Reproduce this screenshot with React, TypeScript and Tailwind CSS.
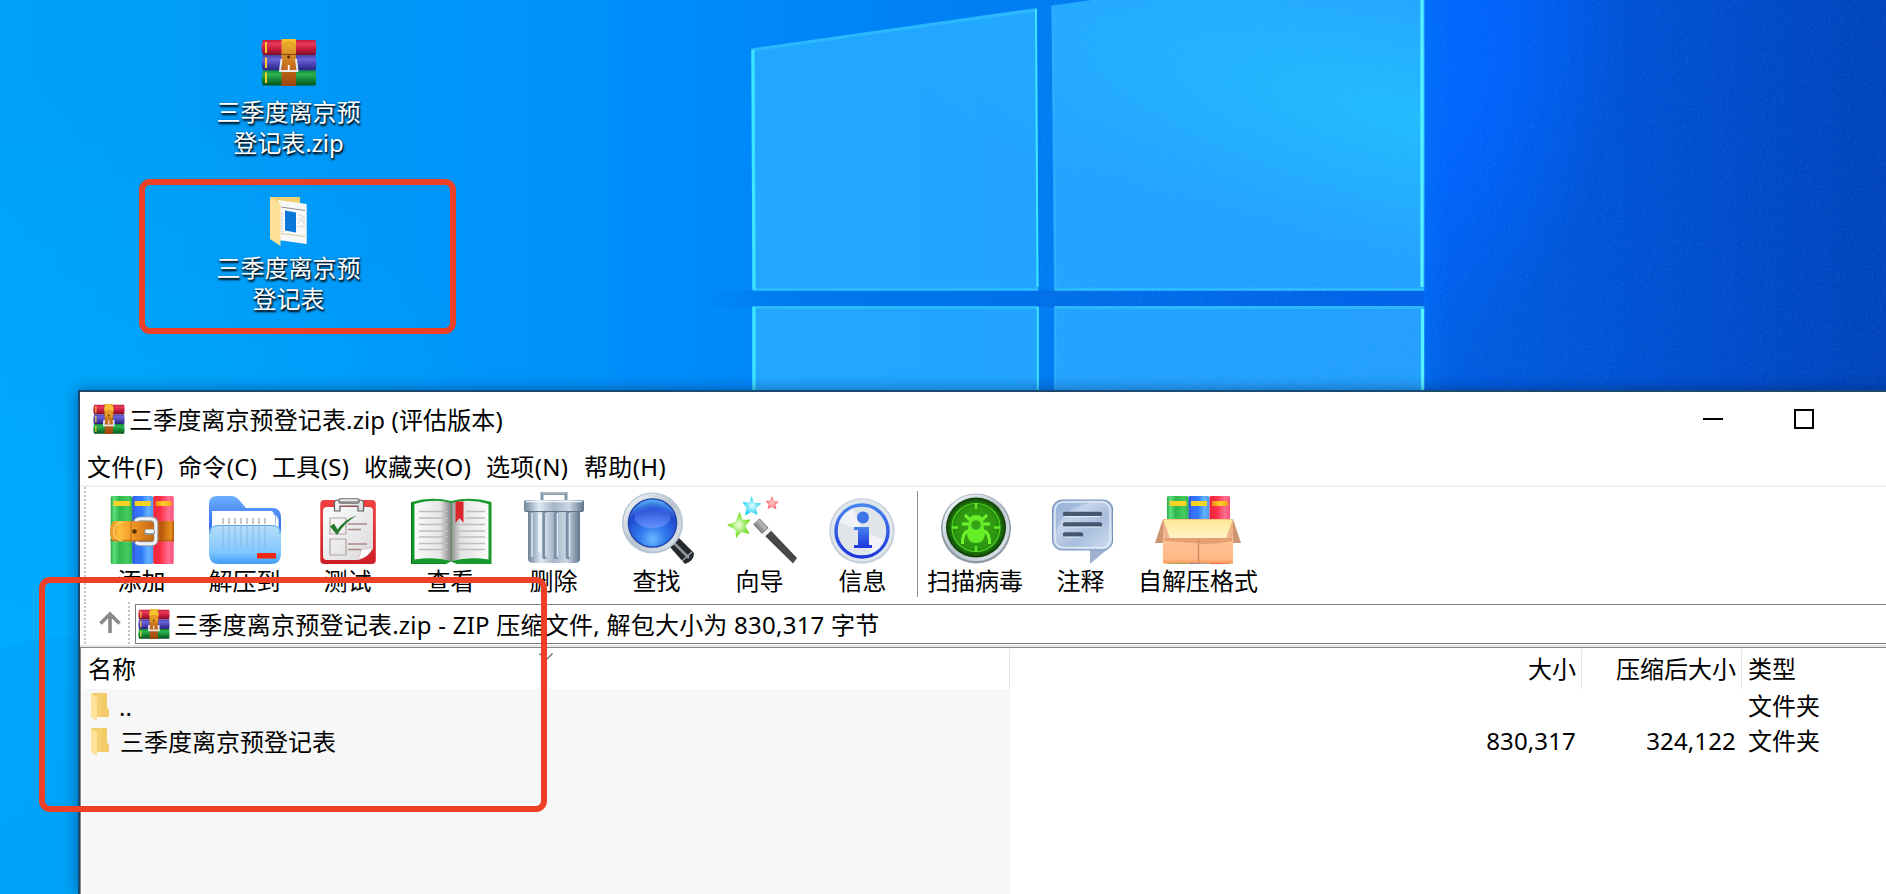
import React from "react";

function Wallpaper() {
  return (
    <svg className="absolute inset-0" width="1886" height="894" viewBox="0 0 1886 894">
      <defs>
        <linearGradient id="sky" x1="0" x2="1886" y1="0" y2="0" gradientUnits="userSpaceOnUse">
          <stop offset="0" stopColor="#00a1f7" />
          <stop offset=".12" stopColor="#009bf7" />
          <stop offset=".3" stopColor="#0092fa" />
          <stop offset=".4" stopColor="#0088fa" />
          <stop offset=".56" stopColor="#007cf2" />
          <stop offset=".7" stopColor="#0068ea" />
          <stop offset=".78" stopColor="#005cdf" />
          <stop offset=".88" stopColor="#0050d2" />
          <stop offset="1" stopColor="#0043bb" />
        </linearGradient>
        <radialGradient id="glowLeft" cx="0" cy="640" r="560" gradientUnits="userSpaceOnUse">
          <stop offset="0" stopColor="#00acff" />
          <stop offset="1" stopColor="#00acff" stopOpacity="0" />
        </radialGradient>
        <radialGradient id="glowRight" cx="0" cy="0" r="1" gradientUnits="userSpaceOnUse" gradientTransform="translate(1400 70) rotate(14) scale(220 330)">
          <stop offset="0" stopColor="#006cff" />
          <stop offset=".45" stopColor="#0064ff" stopOpacity=".85" />
          <stop offset="1" stopColor="#0060ff" stopOpacity="0" />
        </radialGradient>
        <linearGradient id="edgeRight" x1="1424" x2="1450" y1="0" y2="0" gradientUnits="userSpaceOnUse">
          <stop offset="0" stopColor="#0070f8" stopOpacity=".5" />
          <stop offset="1" stopColor="#0070f8" stopOpacity="0" />
        </linearGradient>
        <linearGradient id="gapShade" x1="700" x2="1425" y1="0" y2="0" gradientUnits="userSpaceOnUse">
          <stop offset="0" stopColor="#006ee4" stopOpacity="0" />
          <stop offset=".15" stopColor="#0072e6" stopOpacity=".7" />
          <stop offset="1" stopColor="#0060e6" stopOpacity=".8" />
        </linearGradient>
        <linearGradient id="pane" x1="750" x2="1425" y1="0" y2="0" gradientUnits="userSpaceOnUse">
          <stop offset="0" stopColor="#22a8ff" />
          <stop offset=".55" stopColor="#22a2ff" />
          <stop offset="1" stopColor="#239fff" />
        </linearGradient>
        <radialGradient id="paneGlow" cx="0" cy="0" r="1" gradientUnits="userSpaceOnUse" gradientTransform="translate(1425 120) rotate(14) scale(620 170)">
          <stop offset="0" stopColor="#22c0ff" stopOpacity=".9" />
          <stop offset=".5" stopColor="#22b4ff" stopOpacity=".65" />
          <stop offset="1" stopColor="#22a8ff" stopOpacity="0" />
        </radialGradient>
        <filter id="grain" x="0" y="0" width="100%" height="100%">
          <feTurbulence type="fractalNoise" baseFrequency=".35" numOctaves="2" seed="4" />
          <feColorMatrix values="0 0 0 0 .4  0 0 0 0 .7  0 0 0 0 1  .5 0 0 0 -.17" />
        </filter>
      </defs>
      <rect width="1886" height="894" fill="url(#sky)" />
      <rect width="700" height="894" fill="url(#glowLeft)" />
      <rect x="1040" width="700" height="420" fill="url(#glowRight)" />
      <rect x="1424" width="26" height="392" fill="url(#edgeRight)" />
      <rect x="700" y="290" width="724" height="17" fill="url(#gapShade)" />
      <path d="M0 648 Q40 636 80 638 V894 H0Z" fill="#0099ef" opacity=".3" />
      <g fill="url(#pane)">
        <path d="M751 48.500 1036.500 8 1038.500 290.700H752.500Z" />
        <path d="M1051.500 5.700 1092 0H1424.500V290.700H1054Z" />
        <path d="M752 306H1038.500V400H752Z" />
        <path d="M1054 306H1424.500V400H1054Z" />
      </g>
      <path d="M1051.500 5.700 1092 0H1424.500V290.700H1054ZM751 48.500 1036.500 8 1038.500 290.700H752.500Z" fill="url(#paneGlow)" />
      <g fill="none" stroke="#2ab8ff" strokeWidth="3">
        <path d="M752 50 1036 10M753 289.300H1038M1055 289.300H1424M753 307.500H1038M1055 307.500H1424" />
      </g>
      <path d="M1053 7 1055.500 289M1055.500 307V392" stroke="#2cacff" strokeWidth="2" />
      <g fill="none" stroke="#3ce6ff">
        <path d="M753 50 754 289.500M754 307V392" strokeWidth="3.200" />
        <path d="M1036 9 1037.500 287M1037.800 307V392" strokeWidth="2" />
        <path d="M1422 0V287M1422.500 309V392" strokeWidth="3.200" stroke="#55f2ff" />
      </g>
      <rect x="1040" width="846" height="392" filter="url(#grain)" opacity=".22" />
    </svg>
  );
}

/* Three stacked books held by a belt */
function RarIcon({ small, className }: { small?: boolean; className: string }) {
  const id = small ? "rs" : "rb";
  const rows = [
    ["#e83a5c", "#c41a3c", "#7c0c26"],
    ["#6a66dc", "#4a42b0", "#28227c"],
    ["#2eb450", "#148a38", "#06501c"],
  ];
  return (
    <svg viewBox="0 0 56 47" preserveAspectRatio="none" className={className}>
      <defs>
        {rows.map((r, i) => (
          <linearGradient key={i} id={id + i} x1="0" x2="0" y1="0" y2="1">
            <stop offset="0" stopColor={r[1]} />
            <stop offset=".25" stopColor={r[0]} />
            <stop offset=".6" stopColor={r[1]} />
            <stop offset="1" stopColor={r[2]} />
          </linearGradient>
        ))}
        <linearGradient id={id + "belt"} x1="0" x2="0" y1="0" y2="1">
          <stop offset="0" stopColor="#f8c02c" />
          <stop offset=".25" stopColor="#dd9628" />
          <stop offset=".6" stopColor="#c46c1c" />
          <stop offset="1" stopColor="#9a440c" />
        </linearGradient>
      </defs>
      <path d="M2 1H54.500Q56 8 54.500 16.500H2Q-1 8 2 1Z" fill={`url(#${id}0)`} />
      <path d="M2 16.500H54.500Q56 24 54.500 31.500H2Q-1 24 2 16.500Z" fill={`url(#${id}1)`} />
      <path d="M2 31.500H54.500Q56 39 54.500 46.500H2Q-1 39 2 31.500Z" fill={`url(#${id}2)`} />
      <path d="M4 3H6V14H4ZM4 18.500H6V29H4ZM4 33.500H6V44H4Z" fill="#f6cb2d" />
      <path d="M20.500 0H35V47H20.500Z" fill={`url(#${id}belt)`} />
      {!small && <path d="M20.500 15.500H35" stroke="#8a4a0c" strokeWidth="1" />}
      {small && <path d="M20 10Q19 0 27.500 0T36 10L34.500 21H21Z" fill="#e89a26" stroke="#b8650e" strokeWidth=".8" />}
      {small && <path d="M20 11Q19 0 27.500 0T36 11Q28 7 20 11Z" fill="#f8c436" />}
      {!small && <path d="M22 8Q27.500-1 34 8" fill="none" stroke="#c77b15" strokeWidth=".8" opacity=".7" />}
      <circle cx="27.600" cy="18" r="1.400" fill="#4a2606" />
      <path
        d={small ? "M19.500 25 19 33.500H36.500L36 25" : "M20.500 20 19 32H36.500L35 20"}
        fill="none"
        stroke="#e8eaee"
        strokeWidth={small ? 3 : 2}
        strokeLinejoin="round"
      />
      <path d="M27.700 26V31.500" stroke="#fff" strokeWidth="1.800" />
    </svg>
  );
}

function DesktopFolder() {
  return (
    <svg viewBox="0 0 37 49" className="mr-[2px] h-[49px] w-[37px]">
      <path d="M0 0H30V38H0Z" fill="#f4cf71" />
      <path d="M8 3 36.700 7V47L8 43Z" fill="#f8f8f8" />
      <path d="M11 10 35 13.500" stroke="#8c9399" strokeWidth="1" />
      <path d="M12 16V36" stroke="#c8cdd1" strokeWidth="1.500" strokeDasharray="1.500 1.500" />
      <path d="M15 13.500 26 15.500V35.500L15 33.500Z" fill="#0a78d8" />
      <path d="M28 18 34 19V30L28 29.500M28 21 34 26M33 19 28 27" fill="none" stroke="#dcdcdc" strokeWidth="1" />
      <path d="M11 36.500 35 39.500" stroke="#d6cc9d" strokeWidth="1" />
      <path d="M0 0 10.500 6.500V49L0 42Z" fill="#fde197" />
    </svg>
  );
}

function RowFolder() {
  return (
    <svg viewBox="0 0 19 28" className="h-7 w-[19px]">
      <path d="M0 0H16V14.500L18 17V24H0Z" fill="#f5cf70" />
      <path d="M11 0H16V14.500L18 17V24H11Z" fill="#f0c45a" opacity=".45" />
      <path d="M0 0 6 5V28L0 24Z" fill="#fde298" />
    </svg>
  );
}

function Books() {
  return (
    <g>
      <rect x="0" y="0" width="21.500" height="68" rx="1.500" fill="url(#bkG)" />
      <rect x="21.500" y="0" width="21" height="68" rx="1.500" fill="url(#bkB)" />
      <rect x="42.500" y="0" width="20.500" height="68" rx="1.500" fill="url(#bkR)" />
      <path d="M2.500 5H19.500V10H2.500ZM24 5H40V10H24Z" fill="#f8d326" />
      <path d="M45 5H61V10H45Z" fill="url(#tagR)" />
    </g>
  );
}

function SharedGradients() {
  return (
    <svg width="0" height="0" className="absolute">
      <defs>
        <linearGradient id="bkG"><stop offset="0" stopColor="#28a845" /><stop offset=".15" stopColor="#5ee07e" /><stop offset=".4" stopColor="#2fb84c" /><stop offset=".8" stopColor="#46cc62" /><stop offset="1" stopColor="#2cb34a" /></linearGradient>
        <linearGradient id="bkB"><stop offset="0" stopColor="#1d4fc8" /><stop offset=".15" stopColor="#3a6cf5" /><stop offset=".45" stopColor="#2f7af8" /><stop offset=".75" stopColor="#63b0ff" /><stop offset="1" stopColor="#4d9cf8" /></linearGradient>
        <linearGradient id="bkR"><stop offset="0" stopColor="#e8253e" /><stop offset=".35" stopColor="#ff2d46" /><stop offset=".75" stopColor="#ff6f92" /><stop offset="1" stopColor="#f74f78" /></linearGradient>
        <linearGradient id="tagR"><stop offset="0" stopColor="#fa8a14" /><stop offset=".5" stopColor="#fcd028" /><stop offset="1" stopColor="#fba01c" /></linearGradient>
        <linearGradient id="belt"><stop offset="0" stopColor="#e8901e" /><stop offset=".15" stopColor="#ffbd3a" /><stop offset=".4" stopColor="#ec9024" /><stop offset=".65" stopColor="#c86e14" /><stop offset=".8" stopColor="#b8560c" /><stop offset=".95" stopColor="#e8901e" /><stop offset="1" stopColor="#b8560c" /></linearGradient>
        <linearGradient id="steel" x1="0" y1="0" x2="1" y2="1"><stop offset="0" stopColor="#fafcfd" /><stop offset=".5" stopColor="#b8c3cd" /><stop offset="1" stopColor="#e4ebf0" /></linearGradient>
        <linearGradient id="metal"><stop offset="0" stopColor="#6f8499" /><stop offset=".25" stopColor="#dfe9f5" /><stop offset=".5" stopColor="#a4b5c6" /><stop offset=".75" stopColor="#cbd8e6" /><stop offset="1" stopColor="#5f758b" /></linearGradient>
        <linearGradient id="folderBack" x2="0" y2="1"><stop offset="0" stopColor="#6db0ff" /><stop offset=".6" stopColor="#3a74f2" /></linearGradient>
        <linearGradient id="folderFront" x2="0" y2="1"><stop offset="0" stopColor="#b7def9" /><stop offset=".7" stopColor="#80c8ff" /><stop offset="1" stopColor="#3f9cf7" /></linearGradient>
        <linearGradient id="paper" x2="1" y2="1"><stop offset="0" stopColor="#fff" /><stop offset="1" stopColor="#d8d8d8" /></linearGradient>
        <linearGradient id="redBoard" x2="0" y2="1"><stop offset="0" stopColor="#f14141" /><stop offset="1" stopColor="#cf1d25" /></linearGradient>
        <linearGradient id="pageL"><stop offset="0" stopColor="#fafafa" /><stop offset=".7" stopColor="#e6e6e6" /><stop offset="1" stopColor="#858585" /></linearGradient>
        <linearGradient id="pageR"><stop offset="0" stopColor="#929292" /><stop offset=".25" stopColor="#e2e2e2" /><stop offset="1" stopColor="#fafafa" /></linearGradient>
        <radialGradient id="lens" cx=".5" cy=".85" r=".85"><stop offset="0" stopColor="#6ab8ff" /><stop offset=".35" stopColor="#2f78ee" /><stop offset=".75" stopColor="#2048cc" /><stop offset="1" stopColor="#56b4f8" /></radialGradient>
        <linearGradient id="gloss" x2="0" y2="1"><stop offset="0" stopColor="#3f68f0" stopOpacity=".3" /><stop offset="1" stopColor="#7c9cff" stopOpacity=".7" /></linearGradient>
        <linearGradient id="wand" x1="0" y1="1" x2="1" y2="0"><stop offset="0" stopColor="#101010" /><stop offset=".5" stopColor="#4a4a4a" /><stop offset="1" stopColor="#151515" /></linearGradient>
        <linearGradient id="wandTip" x1="0" y1="1" x2="1" y2="0"><stop offset="0" stopColor="#444" /><stop offset=".6" stopColor="#b5b5b5" /><stop offset="1" stopColor="#555" /></linearGradient>
        <radialGradient id="starG"><stop offset="0" stopColor="#f2ffe6" /><stop offset="1" stopColor="#5cd800" /></radialGradient>
        <radialGradient id="starB"><stop offset="0" stopColor="#e8fcff" /><stop offset="1" stopColor="#10cef4" /></radialGradient>
        <radialGradient id="starR"><stop offset="0" stopColor="#ffd0d0" /><stop offset="1" stopColor="#fa5c62" /></radialGradient>
        <linearGradient id="infoBlue" x2="0" y2="1"><stop offset="0" stopColor="#4684ef" /><stop offset="1" stopColor="#1d34dc" /></linearGradient>
        <radialGradient id="virus"><stop offset="0" stopColor="#3fae1a" /><stop offset=".75" stopColor="#2c9410" /><stop offset="1" stopColor="#12500a" /></radialGradient>
        <linearGradient id="bubble" x1="0" y1="0" x2="1" y2="1"><stop offset="0" stopColor="#9db6da" /><stop offset=".35" stopColor="#c4d4ea" /><stop offset=".6" stopColor="#a9bfde" /><stop offset="1" stopColor="#d2dff2" /></linearGradient>
        <linearGradient id="boxFront" x2="0" y2="1"><stop offset="0" stopColor="#e8a070" /><stop offset=".3" stopColor="#f8b688" /><stop offset=".45" stopColor="#ffc294" /><stop offset=".9" stopColor="#ffb888" /><stop offset="1" stopColor="#f79850" /></linearGradient>
        <linearGradient id="boxLid" x2="0" y2="1"><stop offset="0" stopColor="#ffe894" /><stop offset="1" stopColor="#fff2c8" /></linearGradient>
      </defs>
    </svg>
  );
}

const AddIcon = () => (
  <svg viewBox="0 0 64 68" className="h-[68px] w-16">
    <g transform="translate(.7 0)"><Books /></g>
    <rect x="29" y="21.500" width="19" height="27" rx="5" fill="none" stroke="#8f9aa5" strokeWidth="2" opacity=".6" />
    <path d="M4 25H64V45.500H4Q0 42 0 35.500T4 25Z" fill="url(#belt)" />
    <path d="M0 44.500H64" stroke="#a4500a" strokeWidth="1.500" opacity=".5" />
    <path d="M21 25V45.500" stroke="#a85a10" strokeWidth="1" opacity=".7" />
    <path d="M12 26Q3.500 28 3.500 35.500T12 45" fill="none" stroke="#ffe08a" strokeWidth="1" />
    <circle cx="24.500" cy="35.500" r="2.300" fill="#573008" />
    <path d="M26 25.500V25Q27 23 31 23H40Q46 23 46 28V43Q46 48 41 48H31Q27 48 26 46" fill="none" stroke="#909ca8" strokeWidth="4.400" />
    <path d="M26 25V24.500Q27.500 22.800 31 22.800H40Q45.800 22.800 45.800 28V43Q45.800 47.800 41 47.800H31Q27.500 47.800 26 46" fill="none" stroke="#f0f3f6" strokeWidth="3" />
    <path d="M37 36H42.500" stroke="#8e9aa4" strokeWidth="5.500" strokeLinecap="round" />
    <path d="M37 35.300H42.500" stroke="#eef3f6" strokeWidth="3.600" strokeLinecap="round" />
  </svg>
);

const ExtractIcon = () => (
  <svg viewBox="0 0 72 68" className="h-[68px] w-[72px]">
    <path d="M0 8Q0 0 8 0H22Q27 0 31 5L37 12H64Q72 12 72 22V45H0Z" fill="url(#folderBack)" />
    <path d="M3 15H63L70 24V45H3Z" fill="#fff" />
    <path d="M64 18 66.500 20V45M67.500 19 69.500 24V45" fill="none" stroke="#a9c4ea" strokeWidth="1" />
    <path d="M0 38Q0 29 9 29H63Q72 29 72 38V58Q72 68 62 68H10Q0 68 0 58Z" fill="url(#folderFront)" />
    <path d="M14 22V28M20 22V28M26 22V28M32 22V28M38 22V28M44 22V28M50 22V28M56 22V28" stroke="#b2b6ba" strokeWidth="1.500" />
    <path d="M14 29V52M20 29V52M26 29V52M32 29V52M38 29V52M44 29V52M50 29V52M56 29V52" stroke="#86b8de" strokeWidth="1.600" opacity=".6" />
    <path d="M1 38Q1 29.500 9 29.500H63Q71 29.500 71 38" fill="none" stroke="#62a8ea" strokeWidth="1" />
    <rect x="48" y="57" width="19" height="5.500" rx=".8" fill="#ef2711" />
  </svg>
);

const TestIcon = () => (
  <svg viewBox="0 0 56 66" className="h-[66px] w-14">
    <rect x=".3" y="2" width="55.500" height="64" rx="4" fill="url(#redBoard)" />
    <path d="M7 9H49Q53 9 53 13V51L38 62H7Q3 62 3 58V13Q3 9 7 9Z" fill="url(#paper)" />
    <path d="M53 50Q46 50 41 52 40 58 38 62 49 59 53 50Z" fill="#fff" stroke="#c9a8a8" strokeWidth=".6" />
    <path d="M14.500 13V5Q14.500 2 18 2H40Q43.500 2 43.500 5V13H38V8H20V13Z" fill="url(#paper)" stroke="#5f5f5f" strokeWidth="1.200" />
    <rect x="18" y="0" width="22" height="6" rx="3" fill="#8b8b8b" />
    <rect x="20" y="1.300" width="18" height="2" rx="1" fill="#e8e8e8" />
    <path d="M10 20H26V36H10ZM10 41H26V57H10Z" fill="none" stroke="#b5a2a2" strokeWidth="1.200" />
    <path d="M10 28.500 14 25.500 17.500 31.500Q25 21 37 17.500 25 24 17 37Z" fill="#237a2d" />
    <path d="M28 26H47M28 31.500H41M28 46H47M28 51.500H41" stroke="#a88" strokeWidth="1.500" />
  </svg>
);

const ViewIcon = () => (
  <svg viewBox="0 0 81 66" className="ml-[2px] h-[66px] w-[81px]">
    <path d="M.5 4Q20-2 40 3 60-2 80.500 4V66H46L40 63.500 35 66H.500Z" fill="#159a2b" />
    <path d="M.5 4V66H35" fill="none" stroke="#0b6a1a" strokeWidth="1" />
    <path d="M3.500 6Q24 0 40 5V63Q24 58.500 3.500 61.500Z" fill="url(#pageL)" />
    <path d="M40.500 5Q58 0 77.500 6V61.500Q58 58.500 40.500 63Z" fill="url(#pageR)" />
    <path d="M8 13.500H37M8 20H37M8 26.500H37M8 33H37M8 39H37M8 45.500H37M8 51.500H37M55 13.500H74M44 20H45M54 20H74M45 26.500H74M45 33H74M45 39H74M45 45.500H74M45 51.500H74" stroke="#bdbdbd" strokeWidth="1.400" />
    <path d="M44.500 3.500H52.500V25L48.500 20 44.500 25Z" fill="#d9252b" />
  </svg>
);

const TrashIcon = () => (
  <svg viewBox="0 0 60 72" className="h-[72px] w-[60px]">
    <path d="M18 9V1.500H42V9" fill="none" stroke="#8497a9" strokeWidth="3" />
    <path d="M18 1H42" stroke="#cfd9e2" strokeWidth="1" />
    <path d="M4 18H56V67Q56 71 50 71H10Q4 71 4 67Z" fill="url(#metal)" />
    <path d="M20.500 21V65M32 21V65M44 21V65" stroke="#7b90a6" strokeWidth="4.500" strokeLinecap="round" />
    <path d="M22 21V65M33.500 21V65M45.500 21V65M8 21V65" stroke="#dde7f1" strokeWidth="1.600" />
    <path d="M16 21V60" stroke="#f4f8fc" strokeWidth="4" opacity=".7" />
    <path d="M0 10Q0 8 3 8H57Q60 8 60 10V18Q60 20 57 20H3Q0 20 0 18Z" fill="url(#metal)" />
    <path d="M1 19.500H59" stroke="#5f7489" strokeWidth="1" />
    <path d="M2 9.500H58" stroke="#eff4f9" strokeWidth="1.600" />
  </svg>
);

const FindIcon = () => (
  <svg viewBox="0 0 72 72" className="ml-[3px] h-[72px] w-[72px]">
    <path d="M47 54 57 46 72 61Q72 69 63 72Z" fill="#26292e" />
    <path d="M52 51 67 66" stroke="#8d949b" strokeWidth="2.500" />
    <path d="M60 69 70 60" stroke="#9a9fa5" strokeWidth="1.500" />
    <circle cx="30.500" cy="31" r="30.500" fill="#b4c4d3" />
    <circle cx="30.500" cy="30.500" r="29" fill="url(#steel)" />
    <circle cx="30.500" cy="31" r="24.800" fill="#1f3faa" />
    <circle cx="30.500" cy="31" r="23.500" fill="url(#lens)" />
    <ellipse cx="30.500" cy="25" rx="18" ry="11" fill="url(#gloss)" />
  </svg>
);

const WizardIcon = () => (
  <svg viewBox="0 0 70 68" className="ml-1 h-[68px] w-[70px]">
    <path d="M12.500 17 16 25 23.500 24.500 18.500 31 22.500 39 14.500 37 9 43 8.500 35 0 30 8.500 26.500Z" fill="url(#starG)" transform="translate(0 -1)" />
    <path d="M24.500 0 27 6.500 34.500 7.500 29 12 30.500 19 24.500 16 18 19.500 19.500 12 15.500 6 22.500 6.500Z" fill="url(#starB)" />
    <path d="M45 0 47 5 51.500 5.500 48.500 9 49.500 13.500 45 11 40.500 13 41.500 8.500 38.500 5 43 4.500Z" fill="url(#starR)" />
    <path d="M26.500 28.500 32.500 22.500 70 62 66 67.500Z" fill="url(#wand)" />
    <path d="M26.500 28.500 32.500 22.500 41 31 35 38Z" fill="url(#wandTip)" />
    <path d="M35 38 41.500 31.500 44.500 34.500 37.500 41Z" fill="#f2f2f2" />
  </svg>
);

const InfoIcon = () => (
  <svg viewBox="0 0 66 66" className="mr-px h-[66px] w-[66px]">
    <circle cx="33" cy="33" r="32.800" fill="#c8d1da" />
    <circle cx="33" cy="32.500" r="31" fill="#dfe6ec" />
    <circle cx="33" cy="33" r="26" fill="#e0e5ea" stroke="url(#infoBlue)" strokeWidth="3.400" />
    <path d="M33 33 10 24A24 24 0 0 1 24 10ZM33 33 56 42A24 24 0 0 1 42 56Z" fill="#fff" opacity=".5" />
    <circle cx="34" cy="19.500" r="6" fill="#3d74e9" />
    <path d="M25 29H40V47H43V50H25V47H29V32H25Z" fill="url(#infoBlue)" />
  </svg>
);

const VirusIcon = () => (
  <svg viewBox="0 0 70 71" className="ml-px h-[71px] w-[70px]">
    <circle cx="35" cy="35.500" r="35" fill="#8d9aa5" />
    <circle cx="35" cy="34.500" r="33.500" fill="url(#steel)" />
    <circle cx="35" cy="34.500" r="30" fill="#114409" />
    <circle cx="35" cy="34.500" r="28.500" fill="url(#virus)" />
    <circle cx="35" cy="34.500" r="24" fill="none" stroke="#4ed31d" strokeWidth="1.200" />
    <path d="M35 10V16M35 53V59M11 34.500H17M53 34.500H59" stroke="#5fe82a" strokeWidth="2.400" />
    <g fill="none" stroke="#73f52c" strokeWidth="3">
      <path d="M29 27 24 22M41 27 46 22M28 31H21M42 31H49M27 38Q21 40 21.500 51M43 38Q49 40 48.500 51" />
    </g>
    <path d="M28 30Q27 22 35 22T42 30L44 41Q43 50 35 50T26 41Z" fill="#66ee27" />
    <circle cx="35" cy="32" r="4.800" fill="#37a317" />
  </svg>
);

const CommentIcon = () => (
  <svg viewBox="0 0 61 65" className="ml-[3px] h-[65px] w-[61px]">
    <path d="M38 49 58 48 38 65Z" fill="#9fb3d0" />
    <rect x=".6" y="1" width="60" height="50" rx="10" fill="url(#bubble)" stroke="#7691b9" strokeWidth="1.200" />
    <path d="M4 36Q8 6 45 3H13Q3 4 3 14Z" fill="#7f9ecb" opacity=".35" />
    <rect x="3" y="3.200" width="55" height="45.500" rx="8" fill="none" stroke="#e6eef8" strokeWidth="1.300" />
    <path d="M13 15H48M13 25.500H48M13 35.500H29" stroke="#46566e" strokeWidth="4.400" strokeLinecap="round" />
    <path d="M13 17.500H48M13 28H48M13 38H29" stroke="#e1eaf6" strokeWidth="1" strokeLinecap="round" />
  </svg>
);

const SfxIcon = () => (
  <svg viewBox="0 0 86 68" className="h-[68px] w-[86px]">
    <g transform="translate(12 0)"><Books /></g>
    <path d="M8 23H78V67.500H8Z" fill="url(#boxFront)" />
    <path d="M8 23 0 47H8ZM78 23 86 47H78Z" fill="#cf9470" />
    <path d="M9 42H77V45Q60 49 43 47.500T9 45Z" fill="#cf8557" opacity=".55" />
    <path d="M43.500 43V67" stroke="#cf8d62" strokeWidth="1.500" />
    <path d="M8 23.500H78L71 42H15Z" fill="url(#boxLid)" />
    <path d="M78 23.500 72 42 77 42ZM8 23.500 14 42 9 42Z" fill="#e9b48d" opacity=".7" />
  </svg>
);

type ToolItem = [string, () => React.ReactElement, string];

const tools: ToolItem[] = [
  ["添加", AddIcon, "w-[103px]"],
  ["解压到", ExtractIcon, "w-[103px]"],
  ["测试", TestIcon, "w-[103px]"],
  ["查看", ViewIcon, "w-[103px]"],
  ["删除", TrashIcon, "w-[103px]"],
  ["查找", FindIcon, "w-[103px]"],
  ["向导", WizardIcon, "w-[103px]"],
  ["信息", InfoIcon, "w-[103px]"],
];
const extraTools: ToolItem[] = [
  ["扫描病毒", VirusIcon, "w-[106px]"],
  ["注释", CommentIcon, "w-[105px]"],
  ["自解压格式", SfxIcon, "w-[130px]"],
];

const Tool = ({ item: [label, Icon, width] }: { item: ToolItem }) => (
  <div className={`flex shrink-0 flex-col items-center ${width}`}>
    <div className="flex h-[77px] items-end justify-center"><Icon /></div>
    <span className="mt-[2px] leading-[30px]">{label}</span>
  </div>
);

const Grip = () => (
  <div className="w-[2px] shrink-0 self-stretch bg-[repeating-linear-gradient(to_bottom,#c4c4c4_0_2px,transparent_2px_4px)]" />
);

const menu = [
  ["文件(F)", "w-[91px]"],
  ["命令(C)", "w-[94px]"],
  ["工具(S)", "w-[92px]"],
  ["收藏夹(O)", "w-[122px]"],
  ["选项(N)", "w-[98px]"],
  ["帮助(H)", "w-[90px]"],
];

function ArchiveWindow() {
  return (
    <div className="absolute left-[78px] top-[390px] flex h-[504px] w-[1808px] flex-col border-l-2 border-t-2 border-[#1b4a70] bg-white shadow-[0_0_14px_rgba(0,20,60,0.45)]">
      <div className="flex h-[54px] shrink-0 items-center pl-[13px]">
        <RarIcon small className="h-[30px] w-8" />
        <span className="ml-1 tracking-[0.12px]">三季度离京预登记表.zip (评估版本)</span>
        <div className="ml-auto h-[2px] w-5 bg-black" />
        <div className="ml-[71px] mr-[72px] size-5 border-2 border-black" />
      </div>
      <div className="flex h-[41px] shrink-0 items-center border-b-2 border-[#f0f0f0] pl-[7px] pt-[2px]">
        {menu.map(([m, w]) => (
          <span key={m} className={`shrink-0 tracking-[0.35px] ${w}`}>{m}</span>
        ))}
      </div>
      <div className="flex h-[115px] shrink-0 pl-1">
        <Grip />
        <div className="flex pl-1">
          {tools.map((t) => <Tool key={t[0]} item={t} />)}
          <div className="ml-[3px] mr-[4px] mt-1 h-[106px] w-px bg-[#8c8c8c]" />
          {extraTools.map((t) => <Tool key={t[0]} item={t} />)}
        </div>
      </div>
      <div className="flex h-[43px] shrink-0 items-start pl-1">
        <Grip />
        <svg viewBox="0 0 22 22" className="ml-[13px] mt-[9px] size-[22px]">
          <path d="M11 22V3M1.500 12.500 11 3 20.500 12.500" fill="none" stroke="#8a8a8a" strokeWidth="3.600" />
        </svg>
        <div className="ml-[7px] flex self-stretch"><Grip /></div>
        <div className="ml-[5px] mt-[2px] flex h-10 flex-1 items-center border border-r-0 border-[#7a7a7a] pl-[2px]">
          <RarIcon small className="h-[30px] w-8" />
          <span className="ml-1 tracking-[0.24px]">三季度离京预登记表.zip - ZIP 压缩文件, 解包大小为 830,317 字节</span>
        </div>
      </div>
      <div className="h-[2px] shrink-0 bg-[#e9e9e9]" />
      <div className="flex min-h-0 flex-1 border-l border-t border-[#828790]">
        <div className="flex w-[929px] shrink-0 flex-col pl-px">
          <div className="relative mt-px flex h-10 shrink-0 items-center border-r border-[#e5e5e5] pb-[2px] pl-[6px]">
            名称
            <svg viewBox="0 0 14 8" className="absolute left-[457px] top-1 h-2 w-[14px]">
              <path d="M.5.500 7 7 13.500.500" fill="none" stroke="#666" strokeWidth="1.200" />
            </svg>
          </div>
          <div className="flex flex-1 flex-col bg-[#f7f7f7] pl-[9px]">
            <div className="flex h-[35px] items-center"><RowFolder /><span className="ml-[9px]">..</span></div>
            <div className="flex h-[35px] items-center"><RowFolder /><span className="ml-[10px]">三季度离京预登记表</span></div>
          </div>
        </div>
        <div className="flex w-[572px] shrink-0 flex-col text-right">
          <div className="mt-px flex h-10 items-center justify-end border-r border-[#e5e5e5] pb-[2px] pr-[5px]">大小</div>
          <div className="mt-[34px] h-[35px] pr-[6px] leading-[35px] tracking-[0.15px]">830,317</div>
        </div>
        <div className="flex w-[160px] shrink-0 flex-col text-right">
          <div className="mt-px flex h-10 items-center justify-end border-r border-[#e5e5e5] pb-[2px] pr-[5px]">压缩后大小</div>
          <div className="mt-[34px] h-[35px] pr-[6px] leading-[35px] tracking-[0.15px]">324,122</div>
        </div>
        <div className="flex flex-col pl-[6px]">
          <div className="mt-px flex h-10 items-center pb-[2px]">类型</div>
          <div className="-mt-px h-[35px] leading-[35px]">文件夹</div>
          <div className="h-[35px] leading-[35px]">文件夹</div>
        </div>
      </div>
    </div>
  );
}

export default function App() {
  return (
    <div className="relative h-[894px] w-[1886px] overflow-hidden whitespace-nowrap bg-[#0090f8] font-['Noto_Sans','Noto_Sans_CJK_SC',sans-serif] text-[24px] leading-[31px] text-black">
      <Wallpaper />
      <SharedGradients />
      <div className="absolute left-[209px] top-[39px] flex w-40 flex-col items-center text-center text-white [text-shadow:1px_2px_2px_rgba(0,0,0,0.95),0_1px_3px_rgba(0,0,0,0.6)]">
        <RarIcon className="h-[47px] w-14" />
        <div className="mr-px mt-[10px]">三季度离京预<br />登记表.zip</div>
      </div>
      <div className="absolute left-[209px] top-[197px] flex w-40 flex-col items-center text-center text-white [text-shadow:1px_2px_2px_rgba(0,0,0,0.95),0_1px_3px_rgba(0,0,0,0.6)]">
        <DesktopFolder />
        <div className="mr-px mt-[6px]">三季度离京预<br />登记表</div>
      </div>
      <ArchiveWindow />
      <div className="absolute left-[139px] top-[179px] h-[155px] w-[317px] rounded-[11px] border-[6px] border-[#ee4027]" />
      <div className="absolute left-[39px] top-[577px] h-[235px] w-[508px] rounded-[11px] border-[6px] border-[#ee4027]" />
    </div>
  );
}
